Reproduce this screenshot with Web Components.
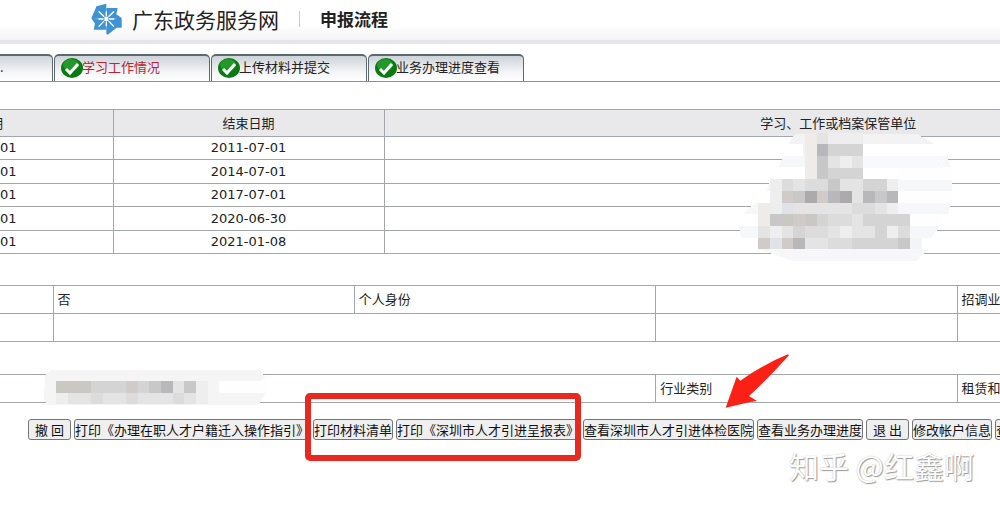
<!DOCTYPE html>
<html lang="zh-CN">
<head>
<meta charset="utf-8">
<title>申报流程</title>
<style>
  body {
    margin: 0;
    background: #fff;
    color: #222;
    font: 13px/20px "Noto Sans CJK SC", sans-serif;
    overflow: hidden;
  }
</style>
</head>
<body>
<declare-page></declare-page>

<script>
class SiteHeader extends HTMLElement {
  constructor() {
    super();
    this.attachShadow({ mode: 'open' }).innerHTML = `
      <style>
        :host {
          display: flex;
          align-items: center;
          height: 38px;
          padding: 0 0 2px 91px;
          background: linear-gradient(#fff 60%, #f4f4f5);
          border-bottom: 4px solid #e6e6e8;
        }
        svg { width: 31px; height: 32px; }
        .name { margin: 0 0 0 10px; font-size: 21px; font-weight: 400; line-height: 32px; }
        .step {
          margin-left: 20px;
          font-size: 17px;
          line-height: 24px;
          font-weight: 700;
        }
        .bar { width: 1px; height: 16px; margin-left: 20px; background: #ccc; }
      </style>
      <svg viewBox="0 0 93 96" aria-hidden="true">
        <path fill="#3f93d2" d="M16 10 46 2V15H80L76 34 92 45V74H77L50 95 46 92V80H8L12 62 1 46 14 16z"/>
        <path fill="none" stroke="#8cc4ec" stroke-width="2" d="M46 15V40M76 47H53M46 80V55M12 47H38"/>
        <path fill="none" stroke="#fff" stroke-width="4" stroke-linecap="round" d="M46 27V38M46 57V68M24 48H36M56 48H68M24 26 38 40M54 55 68 70M68 26 54 40M38 55 24 70"/>
        <path fill="#fff" d="M40 41H52V54H40z"/>
      </svg>
      <h1 class="name"><slot name="name"></slot></h1>
      <span class="bar"></span>
      <span class="step"><slot name="step"></slot></span>
    `;
  }
}

class StepTab extends HTMLElement {
  constructor() {
    super();
    this.attachShadow({ mode: 'open' }).innerHTML = `
      <style>
        :host { display: block; width: 156px; }
        :host([cut]) { width: 53px; }
        button {
          display: flex;
          align-items: center;
          box-sizing: border-box;
          width: 100%;
          height: 27px;
          padding: 0 0 3px 5px;
          border: 1px solid #5b6a70;
          border-top-width: 2px;
          border-bottom: 0;
          border-radius: 5px 5px 0 0;
          background: linear-gradient(#cdd3d8, #f4f5f7 65%, #fff);
          color: inherit;
          font: inherit;
          white-space: nowrap;
        }
        :host([current]) button { color: #b8252f; }
        :host([cut]) button { padding-left: 0; border-left: 0; border-radius: 0 5px 0 0; }
        :host([cut]) svg { display: none; }
        svg { flex: none; width: 24px; height: 22px; margin-right: -2px; }
      </style>
      <button type="button">
        <svg viewBox="0 0 24 22" aria-hidden="true">
          <ellipse cx="12" cy="12" rx="11" ry="10" fill="#0b7a12"/>
          <ellipse cx="11" cy="9" rx="8" ry="6" fill="#22992a"/>
          <path d="M6 13l4 4 8-9" fill="none" stroke="#fff" stroke-width="3"/>
        </svg>
        <slot></slot>
      </button>
    `;
  }
}

class RedactedPatch extends HTMLElement {
  connectedCallback() {
    const size = this.getAttribute('size').split(' ');
    const bands = JSON.parse(this.getAttribute('bands'));
    const rows = JSON.parse(this.getAttribute('rows'));
    const [x0, y0, step] = this.getAttribute('origin').split(' ').map(Number);
    const shades = { a: '#eeeeef', b: '#e4e4e5', c: '#dcdcdd', d: '#d4d4d5', e: '#c8c8c9', f: '#b8b8ba', g: '#acaaab', p: '#eeebe9', q: '#dfe3e8', r: '#d0cbc9', s: '#c9c8c3' };
    let out = '';
    for (const [d, fill] of bands) out += `<path d="${d}" fill="${fill}"/>`;
    rows.forEach((row, r) => {
      [...row].forEach((c, i) => {
        if (shades[c]) out += `<rect x="${x0 + i * step}" y="${y0 + r * step}" width="${step}" height="${step}" fill="${shades[c]}"/>`;
      });
    });
    this.attachShadow({ mode: 'open' }).innerHTML = `
      <style>
        :host { position: absolute; pointer-events: none; }
        svg { display: block; width: ${size[0] / 3}px; }
      </style>
      <svg viewBox="0 0 ${size[0]} ${size[1]}" shape-rendering="crispEdges" aria-hidden="true">${out}</svg>
    `;
  }
}

class HistoryTable extends HTMLElement {
  constructor() {
    super();
    const ends = ['2011-07-01', '2014-07-01', '2017-07-01', '2020-06-30', '2021-01-08'];
    this.attachShadow({ mode: 'open' }).innerHTML = `
      <style>
        :host { display: block; position: relative; }
        table {
          width: calc(100% + 293px);
          border-collapse: collapse;
          table-layout: fixed;
        }
        th, td { box-sizing: border-box; padding: 0; border: 1px solid #a3a6ad; text-align: center; }
        th { height: 27px; background: #e9e9eb; font-weight: 400; }
        td { height: 23px; font-family: "DejaVu Sans", sans-serif; }
        tr:nth-child(even) td { height: 24px; }
        th:first-child, td:first-child { width: 113px; border-left: 0; text-align: left; }
        th:first-child { text-indent: -10px; }
        th:nth-child(2) { width: 271px; }
        redacted-patch { top: -5px; left: 720px; }
      </style>
      <table>
        <thead><tr><th>期</th><th>结束日期</th><th>学习、工作或档案保管单位</th></tr></thead>
        <tbody>${ends.map((end) => `<tr><td>01</td><td>${end}</td><td></td></tr>`).join('')}</tbody>
      </table>
      <redacted-patch size="840 495" origin="115 86 35"
        bands='[["M225 90H590L645 120H205z","#f3f3f4"],["M250 120H430V155H250z","#f3f3f4"],["M190 155H682L692 190H175z","#f6f7f9"],["M140 190H540V226H140z","#fff"],["M150 226H697V261H140z","#f6f7f9"],["M140 261H600V296H105z","#fff"],["M105 296H692L685 331H70z","#f6f7f9"],["M90 331H600V366H90z","#fff"],["M55 366H660L635 401H65z","#f6f7f9"],["M115 401H605V436H115z","#f3f4f6"],["M115 436H627L590 470H215z","#f7f7f9"],["M430 155H670V192H430z","#f7f9fb"],["M115 331H670V366H115zM540 192H697V227H540zM540 261H697V296H540z","#fefefe"]]'
        rows='["....pbaaa","....pfddd","....pebab","....peddd",".acbccebbdda",".aregrfgbfef","paqbbbbbccba","pesrsdccbdddd","babdccbabbdac","rqrfbbccdddde"]'></redacted-patch>
    `;
  }
}

class DetailTable extends HTMLElement {
  constructor() {
    super();
    this.attachShadow({ mode: 'open' }).innerHTML = `
      <style>
        :host { display: block; position: relative; }
        table { width: 100%; border-collapse: collapse; table-layout: fixed; }
        td {
          box-sizing: border-box;
          height: 28px;
          padding: 0 4px 2px;
          border: 1px solid #a3a6ad;
          white-space: nowrap;
          overflow: hidden;
        }
        td:first-child { border-left: 0; }
        td:last-child { border-right: 0; }
        .unit { margin-top: 32px; }
        .lead { width: 53px; }
        .tail { width: 43px; }
        redacted-patch { top: 82px; left: 40px; }
      </style>
      <table>
        <colgroup><col class="lead"><col><col><col><col class="tail"></colgroup>
        <tr><td></td><td>否</td><td>个人身份</td><td></td><td>招调业</td></tr>
        <tr><td></td><td colspan="2"></td><td></td><td></td></tr>
      </table>
      <table class="unit">
        <colgroup><col class="lead"><col><col><col><col class="tail"></colgroup>
        <tr><td colspan="3"></td><td>行业类别</td><td>租赁和</td></tr>
      </table>
      <redacted-patch size="690 120" origin="48 42 35"
        bands='[["M30 9H660L675 30 660 42 675 78 655 113H20L12 95 15 25z","#f5f5f6"],["M538 42H675V78H538z","#fefefe"]]'
        rows='["sssdddrdefbea","abbcbbcbbbcba"]'></redacted-patch>
    `;
  }
}

class ActionBar extends HTMLElement {
  constructor() {
    super();
    this.attachShadow({ mode: 'open' }).innerHTML = `
      <style>
        :host { display: flex; gap: 3px; padding: 16px 0 0 28px; position: relative; }
        button {
          flex: none;
          height: 21px;
          padding: 0;
          border: 1px solid #767676;
          border-radius: 3px;
          background: #efefef;
          color: #111;
          font: inherit;
          line-height: 19px;
          white-space: nowrap;
        }
        .short { padding: 0 6px; }
        .frame {
          position: absolute;
          top: -10px;
          left: 305px;
          box-sizing: border-box;
          width: 276px;
          height: 68px;
          border: 6px solid #e8291f;
          border-radius: 5px;
        }
        .arrow { position: absolute; top: -48px; left: 720px; width: 80px; overflow: visible; }
      </style>
      <button type="button" class="short">撤 回</button>
      <button type="button">打印《办理在职人才户籍迁入操作指引》</button>
      <button type="button">打印材料清单</button>
      <button type="button">打印《深圳市人才引进呈报表》</button>
      <button type="button">查看深圳市人才引进体检医院</button>
      <button type="button">查看业务办理进度</button>
      <button type="button" class="short">退 出</button>
      <button type="button">修改帐户信息</button>
      <button type="button">查</button>
      <span class="frame"></span>
      <svg class="arrow" viewBox="0 0 240 180" aria-hidden="true">
        <path fill="#fb2016" d="M17 158 50 65 61 77Q130 28 204 -2L207 1Q150 65 87 123L111 138 90 141z"/>
      </svg>
    `;
  }
}

class DeclarePage extends HTMLElement {
  constructor() {
    super();
    this.attachShadow({ mode: 'open' }).innerHTML = `
      <style>
        :host { display: block; overflow: hidden; }
        nav { display: flex; gap: 1px; padding-top: 10px; border-bottom: 1px solid #8b9096; }
        history-table { margin-top: 27px; }
        detail-table { margin-top: 31px; }
        footer {
          margin: 3px 26px 0 0;
          color: #fff;
          font-size: 30px;
          line-height: 44px;
          text-align: right;
          text-shadow: 1px 1px 1px #999, 0 0 1px #aaa;
        }
      </style>
      <site-header><span slot="name">广东政务服务网</span><span slot="step">申报流程</span></site-header>
      <nav>
        <step-tab cut>.</step-tab>
        <step-tab current>学习工作情况</step-tab>
        <step-tab>上传材料并提交</step-tab>
        <step-tab>业务办理进度查看</step-tab>
      </nav>
      <history-table></history-table>
      <detail-table></detail-table>
      <action-bar></action-bar>
      <footer>知乎 @红鑫啊</footer>
    `;
  }
}

customElements.define('site-header', SiteHeader);
customElements.define('step-tab', StepTab);
customElements.define('redacted-patch', RedactedPatch);
customElements.define('history-table', HistoryTable);
customElements.define('detail-table', DetailTable);
customElements.define('action-bar', ActionBar);
customElements.define('declare-page', DeclarePage);
</script>
</body>
</html>
